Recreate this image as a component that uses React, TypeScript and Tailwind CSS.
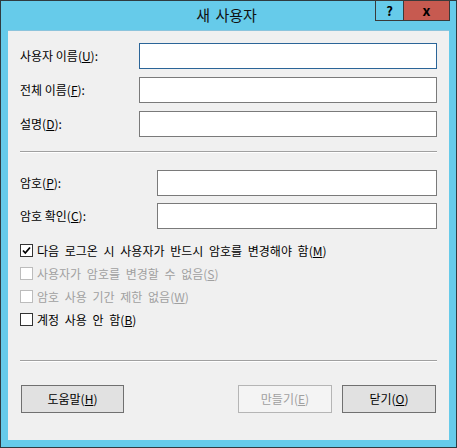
const font = "font-['Noto_Sans_CJK_KR','Noto_Sans',sans-serif]";

function Field({ label, k, rest, focused }: { label: string; k: string; rest?: string; focused?: boolean }) {
  return (
    <div className="flex h-[26px] items-center justify-between">
      <span className="text-[12px] text-black">
        {label}(<span className="underline">{k}</span>){rest ?? ":"}
      </span>
      <div
        className={
          "h-[26px] border bg-white " +
          (focused ? "border-[#2b6598] w-[298px]" : "border-[#7a7a7a] w-[298px]")
        }
      />
    </div>
  );
}

function PassField({ label, k }: { label: string; k: string }) {
  return (
    <div className="flex h-[26px] items-center justify-between">
      <span className="text-[12px] text-black">
        {label}(<span className="underline">{k}</span>):
      </span>
      <div className="h-[26px] w-[280px] border border-[#7a7a7a] bg-white" />
    </div>
  );
}

function Check({ label, k, checked, disabled }: { label: string; k: string; checked?: boolean; disabled?: boolean }) {
  return (
    <div className="flex h-[23px] items-center gap-[4px]">
      <div
        className={
          "flex h-[13px] w-[13px] items-center justify-center border bg-white " +
          (disabled ? "border-[#bcbcbc]" : "border-[#333333]")
        }
      >
        {checked && (
          <svg width="11" height="11" viewBox="0 0 11 11">
            <path d="M2 5.5 L4.3 8 L9 2.5" fill="none" stroke="#000" strokeWidth="1.8" />
          </svg>
        )}
      </div>
      <span className={"text-[12px] [word-spacing:3px] " + (disabled ? "text-[#a0a0a0]" : "text-black")}>
        {label}(<span className="underline">{k}</span>)
      </span>
    </div>
  );
}

function Separator() {
  return <div className="mx-[12px] h-[2px] border-t border-[#a0a0a0] border-b-white border-b" />;
}

export default function App() {
  return (
    <div className={"h-[448px] w-[457px] border border-[#2f3b40] bg-[#66cbea] " + font}>
      <div className="relative flex h-[29px] items-center justify-center">
        <span className="pb-[1px] pr-[4px] text-[15px] text-[#111] [word-spacing:2px]">새 사용자</span>
        <div className="absolute right-[6px] top-[-1px] flex">
          <div className="flex h-[21px] w-[29px] items-center justify-center border border-[#3a3a3a] bg-[#66cbea] text-[13px] font-bold text-black">
            ?
          </div>
          <div className="ml-[-1px] flex h-[21px] w-[47px] items-center justify-center border border-[#3a3a3a] bg-[#c75a50] text-[14px] font-bold text-black">
            x
          </div>
        </div>
      </div>
      <div className="mx-[7px] h-[410px] border-t border-[#8cc4dc] bg-[#f0f0f0]">
        <div className="flex flex-col gap-[8px] px-[12px] pt-[12px]">
          <Field label="사용자 이름" k="U" focused />
          <Field label="전체 이름" k="F" />
          <Field label="설명" k="D" />
        </div>
        <div className="mt-[14px]">
          <Separator />
        </div>
        <div className="flex flex-col gap-[7px] px-[12px] pt-[17px]">
          <PassField label="암호" k="P" />
          <PassField label="암호 확인" k="C" />
        </div>
        <div className="flex flex-col px-[12px] pt-[10px]">
          <Check label="다음 로그온 시 사용자가 반드시 암호를 변경해야 함" k="M" checked />
          <Check label="사용자가 암호를 변경할 수 없음" k="S" disabled />
          <Check label="암호 사용 기간 제한 없음" k="W" disabled />
          <Check label="계정 사용 안 함" k="B" />
        </div>
        <div className="mt-[29px]">
          <Separator />
        </div>
        <div className="flex items-center px-[13px] pt-[23px]">
          <button className="h-[28px] w-[103px] border border-[#707070] bg-[#e1e1e1] text-[12px] text-black">
            도움말(<span className="underline">H</span>)
          </button>
          <div className="flex-1" />
          <button className="h-[28px] w-[94px] border border-[#b5b5b5] bg-[#f4f4f4] text-[12px] text-[#a0a0a0]">
            만들기(<span className="underline">E</span>)
          </button>
          <button className="ml-[10px] h-[28px] w-[94px] border border-[#707070] bg-[#e1e1e1] text-[12px] text-black">
            닫기(<span className="underline">O</span>)
          </button>
        </div>
      </div>
    </div>
  );
}
